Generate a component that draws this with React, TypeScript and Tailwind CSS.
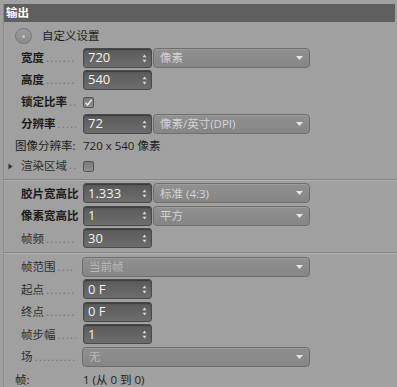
import React from "react";

const FONT = { fontFamily: '"Open Sans", "Noto Sans CJK SC", sans-serif' };

function Dots() {
  return (
    <span className="flex-1 min-w-0 overflow-hidden whitespace-nowrap text-[11px] leading-none tracking-[1.3px] text-[#727272] self-end mb-[6px] mr-[7px] ml-[2px]">
      ..............................
    </span>
  );
}

function Label({ text, bold, width = 62 }: { text: string; bold?: boolean; width?: number }) {
  return (
    <div className="flex items-center h-full shrink-0" style={{ width }}>
      <span className={`whitespace-nowrap shrink-0 ${bold ? "font-bold text-[#1c1c1c]" : "text-[#2e2e2e]"}`}>{text}</span>
      <Dots />
    </div>
  );
}

function Spinner() {
  return (
    <svg width="5" height="9" viewBox="0 0 5 9" className="shrink-0">
      <path d="M2.5 0.5 L4.5 3.2 L0.5 3.2 Z" fill="#d8d8d8" />
      <path d="M2.5 8.5 L4.5 5.8 L0.5 5.8 Z" fill="#d8d8d8" />
    </svg>
  );
}

function NumInput({ value }: { value: string }) {
  return (
    <div className="flex items-center justify-between shrink-0 w-[69px] h-[20px] rounded-[3px] border border-[#4a4a4a] bg-gradient-to-b from-[#5a5a5a] to-[#6d6d6d] pl-[4px] pr-[4px] text-[13px] text-[#f2f2f2] shadow-[inset_0_1px_1px_rgba(0,0,0,0.35)]">
      <span className="whitespace-nowrap">{value}</span>
      <Spinner />
    </div>
  );
}

function Caret() {
  return (
    <svg width="7" height="4" viewBox="0 0 7 4" className="shrink-0">
      <path d="M0 0 L7 0 L3.5 4 Z" fill="#e6e6e6" />
    </svg>
  );
}

function Select({ text, width = 157, dim }: { text: string; width?: number; dim?: boolean }) {
  return (
    <div
      className="flex items-center justify-between shrink-0 h-[20px] rounded-[4px] border border-[#6e6e6e] bg-gradient-to-b from-[#909090] to-[#868686] pl-[6px] pr-[6px] shadow-[inset_0_1px_0_rgba(255,255,255,0.12)]"
      style={{ width }}
    >
      <span className={`whitespace-nowrap ${dim ? "text-[#b9b9b9]" : "text-[#d3d3d3]"}`}>{text}</span>
      <Caret />
    </div>
  );
}

function Check({ checked }: { checked?: boolean }) {
  return (
    <div className="flex items-center justify-center shrink-0 w-[11px] h-[11px] rounded-[2px] border border-[#555] bg-gradient-to-b from-[#7a7a7a] to-[#8e8e8e]">
      {checked && (
        <svg width="9" height="9" viewBox="0 0 9 9">
          <path d="M1.5 4.8 L3.6 7 L7.6 1.6" stroke="#f0f0f0" strokeWidth="1.4" fill="none" />
        </svg>
      )}
    </div>
  );
}

function Row({ h = 22, children, pl = 21 }: { h?: number; children: React.ReactNode; pl?: number }) {
  return (
    <div className="flex items-center" style={{ height: h, paddingLeft: pl }}>
      {children}
    </div>
  );
}

function Separator() {
  return (
    <div className="flex items-center h-[6px]">
      <div className="w-full h-[1px] bg-[#858585] shadow-[0_1px_0_#b0b0b0]" />
    </div>
  );
}

export default function App() {
  return (
    <div className="w-[397px] h-[387px] bg-[#a0a0a0] text-[11.5px] overflow-hidden pt-[4px]" style={FONT}>
      <div className="ml-[3px] h-full border-l border-[#8c8c8c]">
        <div className="mr-[2px] h-[18px] bg-[#5f5f5f] flex items-center pl-[2px]">
          <span className="font-bold text-white">输出</span>
        </div>

        <div className="flex items-center h-[22px] mt-[3px] pl-[11px]">
          <div className="flex items-center justify-center w-[17px] h-[16px] rounded-full border border-[#7a7a7a] bg-gradient-to-b from-[#9a9a9a] to-[#8a8a8a]">
            <div className="w-[3px] h-[3px] rounded-full bg-[#c8c8c8]" />
          </div>
          <span className="ml-[10px] text-[#1e1e1e]">自定义设置</span>
        </div>

        <Row pl={17}>
          <Label text="宽度" bold />
          <NumInput value="720" />
          <div className="ml-[1px]">
            <Select text="像素" />
          </div>
        </Row>
        <Row pl={17}>
          <Label text="高度" bold />
          <NumInput value="540" />
        </Row>
        <Row pl={17}>
          <Label text="锁定比率" bold />
          <Check checked />
        </Row>
        <Row pl={17}>
          <Label text="分辨率" bold />
          <NumInput value="72" />
          <div className="ml-[1px]">
            <Select text="像素/英寸(DPI)" />
          </div>
        </Row>
        <Row pl={11} h={21}>
          <span className="w-[68px] text-[#1e1e1e]">图像分辨率:</span>
          <span className="text-[#1e1e1e]">720 x 540 像素</span>
        </Row>
        <Row pl={4} h={20}>
          <svg width="5" height="7" viewBox="0 0 5 7" className="mr-[8px]">
            <path d="M0.5 0.5 L4.5 3.5 L0.5 6.5 Z" fill="#333" />
          </svg>
          <Label text="渲染区域" />
          <Check />
        </Row>

        <Separator />

        <Row pl={17} h={22.5}>
          <Label text="胶片宽高比" bold />
          <NumInput value="1.333" />
          <div className="ml-[1px]">
            <Select text="标准 (4:3)" />
          </div>
        </Row>
        <Row pl={17} h={22.5}>
          <Label text="像素宽高比" bold />
          <NumInput value="1" />
          <div className="ml-[1px]">
            <Select text="平方" />
          </div>
        </Row>
        <Row pl={17} h={22.5}>
          <Label text="帧频" />
          <NumInput value="30" />
        </Row>

        <Separator />

        <Row pl={17} h={22.5}>
          <Label text="帧范围" width={61} />
          <Select text="当前帧" width={228} dim />
        </Row>
        <Row pl={17} h={22.5}>
          <Label text="起点" />
          <NumInput value="0 F" />
        </Row>
        <Row pl={17} h={22.5}>
          <Label text="终点" />
          <NumInput value="0 F" />
        </Row>
        <Row pl={17} h={22.5}>
          <Label text="帧步幅" />
          <NumInput value="1" />
        </Row>
        <Row pl={17} h={22.5}>
          <Label text="场" width={61} />
          <Select text="无" width={228} dim />
        </Row>
        <Row pl={11} h={22.5}>
          <span className="w-[68px] text-[#1e1e1e]">帧:</span>
          <span className="text-[#1e1e1e]">1 (从 0 到 0)</span>
        </Row>
      </div>
    </div>
  );
}
